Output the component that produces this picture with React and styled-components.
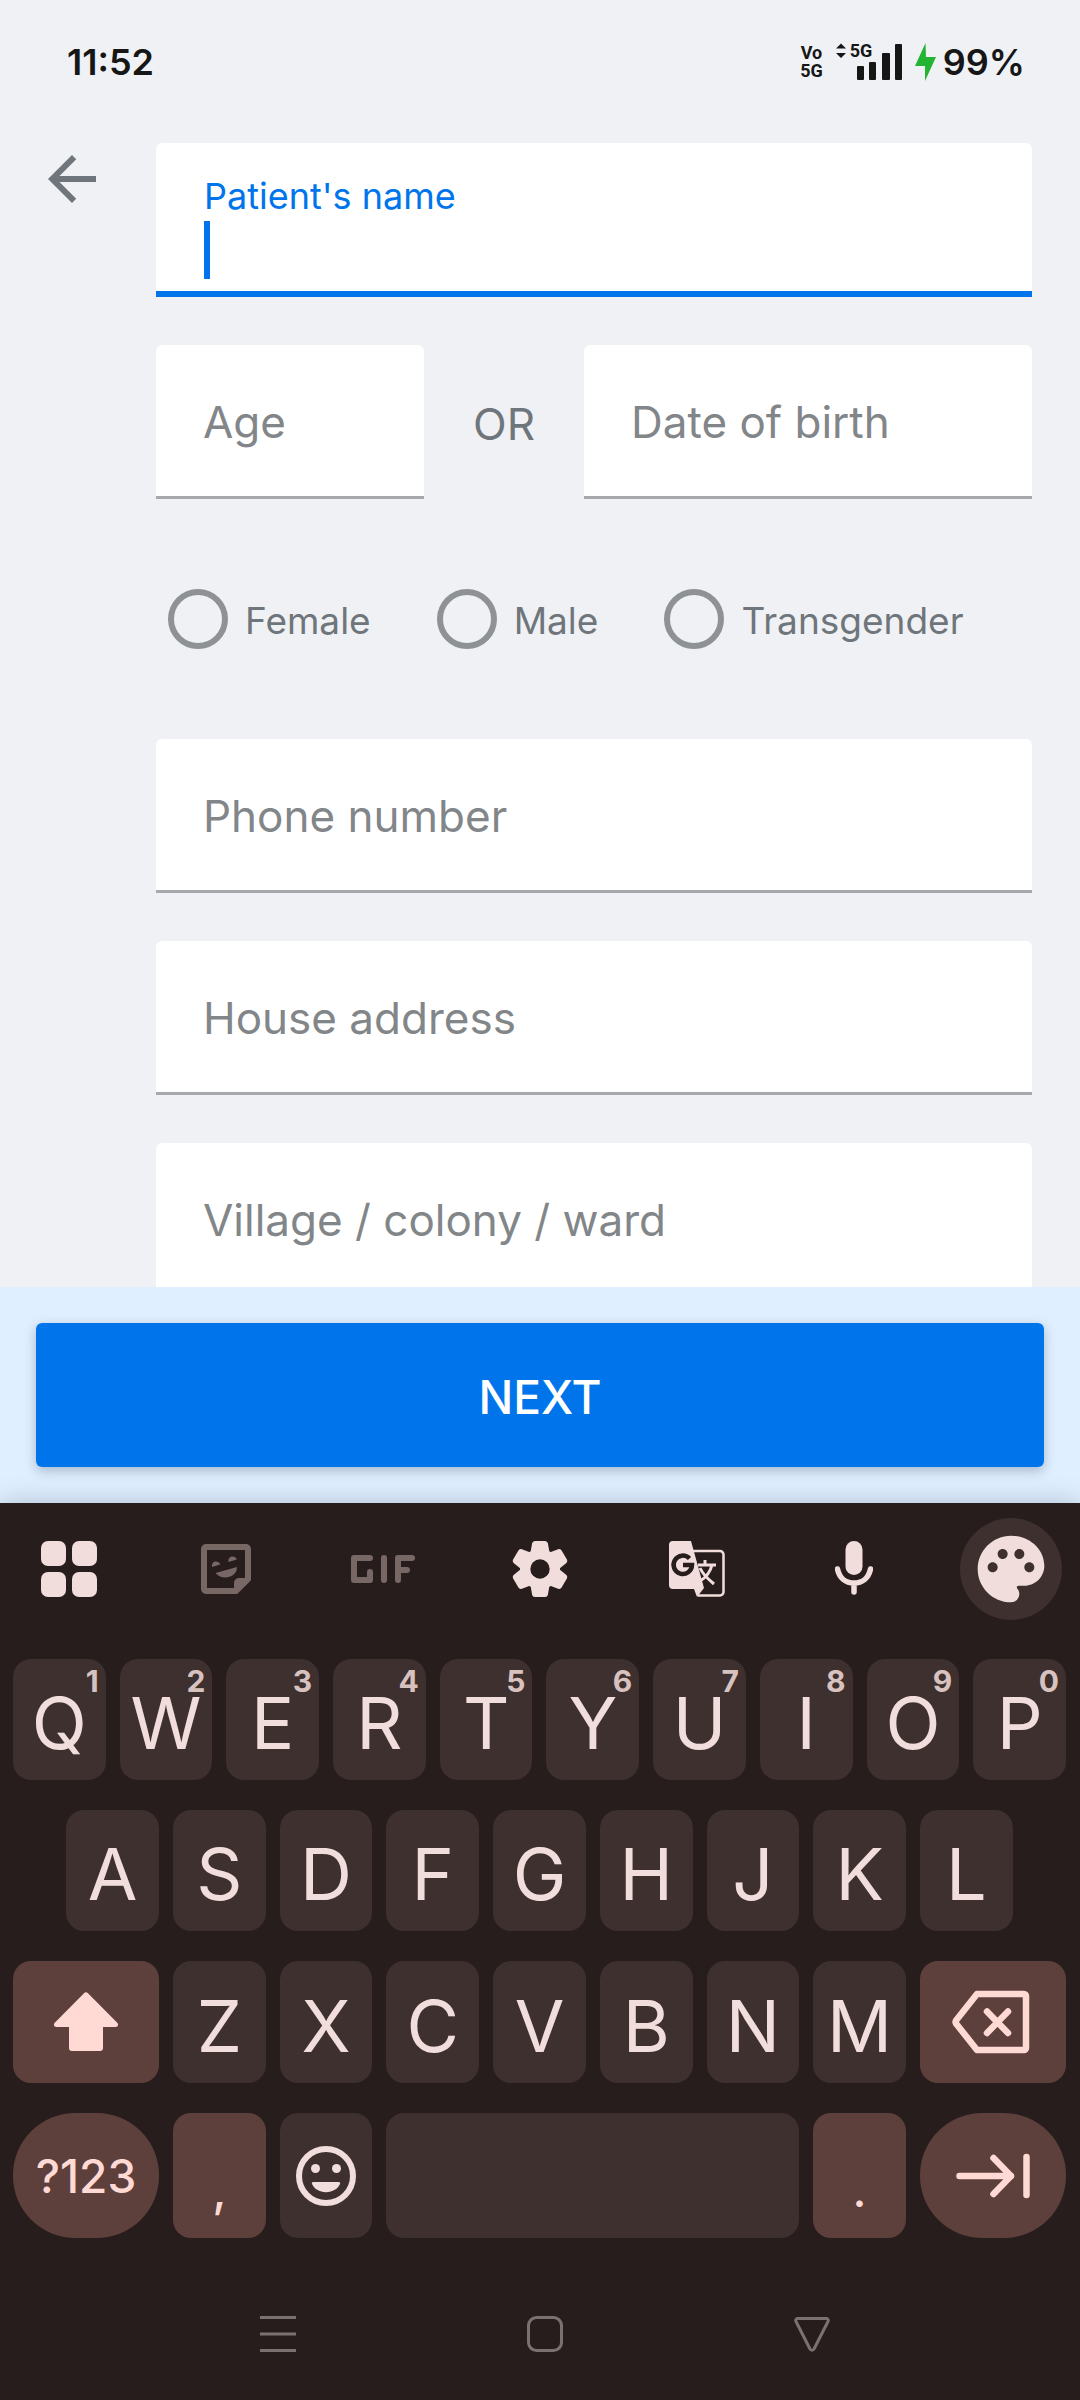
import React from "react";
import styled, { createGlobalStyle } from "styled-components";
import { MdArrowBack, MdPalette } from "react-icons/md";

const color = {
  page: "#f0f1f5",
  ink: "#161616",
  blue: "#0075eb",
  footer: "#dfefff",
  label: "#6f767b",
  hint: "#828689",
  line: "#a6a8ab",
  board: "#271d1c",
  key: "#3d302f",
  keyAccent: "#5d3f3b",
  keyText: "#f1dedc",
  keyAccentText: "#ffdad4",
  keyHint: "#d8c2bf",
  dim: "#776765",
  nav: "#7a7271",
};

const GlobalStyle = createGlobalStyle`
  * { box-sizing: border-box; }
  body { margin: 0; background: ${color.page}; }
  body, button, input { font-family: Inter, "Liberation Sans", sans-serif; }
  button { border: 0; padding: 0; background: none; cursor: pointer; }
`;

const Screen = styled.div`
  display: flex;
  flex-direction: column;
  height: 100vh;
  background: ${color.page};
`;

/* ---------- status bar ---------- */

const StatusBar = styled.header`
  display: flex;
  flex: none;
  align-items: center;
  justify-content: space-between;
  height: 124px;
  padding: 0 55px 0 67px;
  color: ${color.ink};
`;

const Clock = styled.time`
  font-size: 36px;
  font-weight: 600;
`;

const StatusIcons = styled.div`
  display: flex;
  align-items: center;
`;

const VoBadge = styled.span`
  display: flex;
  flex-direction: column;
  align-items: center;
  margin-right: 12px;
  font: 700 18px/18px "Liberation Sans Narrow", Roboto, sans-serif;
`;

const SignalBox = styled.span`
  position: relative;
  display: flex;
  margin-right: 12px;
`;

const SignalLabel = styled.span`
  position: absolute;
  top: 0;
  left: 15px;
  font: 700 18px/16px "Liberation Sans Narrow", Roboto, sans-serif;
`;

const Battery = styled.span`
  margin-left: 6px;
  font-size: 36px;
  font-weight: 600;
`;

/* ---------- form ---------- */

const Body = styled.main`
  display: flex;
  flex: 1;
  min-height: 0;
  overflow: hidden;
  align-items: flex-start;
  padding: 19px 48px 0 36px;
`;

const BackButton = styled.button`
  display: flex;
  flex: none;
  margin-right: 48px;
  color: ${color.label};
`;

const Form = styled.form`
  display: flex;
  flex: 1;
  flex-direction: column;
  gap: 48px;
  min-width: 0;
`;

const FieldBox = styled.div`
  display: grid;
  flex: ${(p) => p.$grow || "none"};
  align-items: center;
  height: 154px;
  min-width: 0;
  background: #fff;
  border-bottom: 3px solid ${color.line};
  border-radius: 6px 6px 0 0;
`;

const FieldLabel = styled.label`
  grid-area: 1 / 1;
  padding: 2px 0 0 47px;
  font-size: 44px;
  line-height: 56px;
  white-space: nowrap;
  color: ${color.hint};
`;

const FieldInput = styled.input`
  grid-area: 1 / 1;
  align-self: stretch;
  width: 100%;
  min-width: 0;
  padding: 0 47px;
  border: 0;
  outline: 0;
  background: transparent;
  font-size: 44px;
  color: ${color.ink};
`;

const ActiveField = styled.div`
  display: flex;
  flex-direction: column;
  height: 154px;
  padding: 28px 48px 0;
  background: #fff;
  border-bottom: 6px solid ${color.blue};
  border-radius: 6px 6px 0 0;
`;

const ActiveLabel = styled.label`
  font-size: 36px;
  line-height: 50px;
  color: ${color.blue};
`;

const ActiveEntry = styled.div`
  display: flex;
  height: 58px;
`;

const Caret = styled.span`
  flex: none;
  width: 6px;
  background: ${color.blue};
`;

const ActiveInput = styled.input`
  flex: 1;
  min-width: 0;
  padding: 0;
  border: 0;
  outline: 0;
  background: transparent;
  caret-color: transparent;
  font-size: 44px;
  color: ${color.ink};
`;

const SplitRow = styled.div`
  display: flex;
  align-items: center;
`;

const OrText = styled.span`
  flex: none;
  width: 160px;
  padding-top: 4px;
  font-size: 44px;
  text-align: center;
  color: ${color.label};
`;

const RadioGroup = styled.div`
  display: flex;
  gap: 66px;
  padding: 42px 12px;
`;

const RadioLabel = styled.label`
  display: flex;
  align-items: center;
  gap: 17px;
  font-size: 37px;
  line-height: 56px;
  color: ${color.label};
`;

const RadioText = styled.span`
  padding-top: 4px;
`;

const Radio = styled.input`
  flex: none;
  width: 60px;
  height: 60px;
  margin: 0;
  appearance: none;
  border: 6px solid #8f9294;
  border-radius: 50%;

  &:checked {
    border-color: ${color.blue};
    box-shadow: inset 0 0 0 10px ${color.page};
    background: ${color.blue};
  }
`;

const Footer = styled.footer`
  flex: none;
  padding: 36px;
  background: ${color.footer};
`;

const NextButton = styled.button`
  width: 100%;
  height: 144px;
  padding-top: 4px;
  border-radius: 6px;
  background: ${color.blue};
  box-shadow: 0 4px 12px rgba(40, 60, 90, 0.3);
  font-size: 46px;
  font-weight: 500;
  color: #fff;
`;

/* ---------- keyboard ---------- */

const Keyboard = styled.section`
  position: relative;
  flex: none;
  background: ${color.board};
  box-shadow: 0 0 24px rgba(40, 50, 70, 0.25);
`;

const Toolbar = styled.div`
  display: flex;
  justify-content: space-between;
  padding: 15px 18px 39px;
`;

const Tool = styled.button`
  display: flex;
  align-items: center;
  justify-content: center;
  width: 102px;
  height: 102px;
  border-radius: 50%;
  background: ${(p) => (p.$filled ? color.key : "transparent")};
  color: ${(p) => (p.$dim ? color.dim : color.keyText)};
`;

const KeyGrid = styled.div`
  display: grid;
  grid-template-columns: repeat(20, 1fr);
  grid-template-rows: 121px 121px 122px 125px;
  gap: 30px 14px;
  padding: 0 14px 0 13px;
`;

const keyPadding = (p) => {
  if (p.$low) return 28;
  return p.$icon || p.$small ? 0 : 6;
};

const Key = styled.button`
  position: relative;
  display: flex;
  align-items: center;
  justify-content: center;
  grid-column: ${(p) => (p.$start ? `${p.$start} / ` : "")}span ${(p) => p.$span || 2};
  min-width: 0;
  padding-top: ${keyPadding}px;
  border-radius: ${(p) => (p.$round ? 62 : 18)}px;
  background: ${(p) => (p.$accent ? color.keyAccent : color.key)};
  color: ${(p) => (p.$accent ? color.keyAccentText : color.keyText)};
  font-size: ${(p) => (p.$small ? 46 : 72)}px;
  font-weight: ${(p) => (p.$small ? 500 : 400)};
`;

const KeyHint = styled.span`
  position: absolute;
  top: 4px;
  right: 7px;
  font-size: 30px;
  font-weight: 700;
  line-height: 36px;
  color: ${color.keyHint};
`;

const NavBar = styled.nav`
  display: flex;
  height: 162px;
  padding: 30px 134px 0 144px;
`;

const NavButton = styled.button`
  display: flex;
  flex: 1;
  align-items: center;
  justify-content: center;
  color: ${color.nav};
`;

/* ---------- drawings ---------- */

const Signal = () => (
  <svg width="68" height="38" viewBox="0 0 68 38" fill="currentColor" aria-hidden="true">
    <path d="M6 0.500l5 5H1zM6 15l5-5H1z" />
    <rect x="22" y="23" width="7" height="14" rx="1" />
    <rect x="34" y="19" width="7" height="18" rx="1" />
    <rect x="47" y="10" width="8" height="27" rx="1" />
    <rect x="60" y="1" width="7" height="36" rx="1" />
  </svg>
);

const Bolt = () => (
  <svg width="22" height="38" viewBox="0 0 22 38" fill="#24b333" aria-hidden="true">
    <path d="M10.500 0L0 23h10v15L21 14H11z" />
  </svg>
);

const GridIcon = () => (
  <svg width="56" height="56" viewBox="0 0 56 56" fill="currentColor" aria-hidden="true">
    <rect width="25" height="25" rx="7" />
    <rect x="31" width="25" height="25" rx="7" />
    <rect y="31" width="25" height="25" rx="7" />
    <rect x="31" y="31" width="25" height="25" rx="7" />
  </svg>
);

const StickerIcon = () => (
  <svg width="50" height="50" viewBox="0 0 50 50" fill="none" aria-hidden="true">
    <path
      d="M5 3h40a2 2 0 0 1 2 2v30L35 47H5a2 2 0 0 1-2-2V5a2 2 0 0 1 2-2z"
      stroke="currentColor"
      strokeWidth="6"
    />
    <path d="M33 48V39a5 5 0 0 1 5-5h10z" fill="currentColor" />
    <path d="M11 23a4.300 4.300 0 1 1 8.300-2.500zM27.500 18a4.300 4.300 0 1 1 8.300-2.500zM14.500 29L36 23c0 11-15 14-21.500 6z" fill="currentColor" />
  </svg>
);

const GifIcon = () => (
  <svg
    width="64"
    height="28"
    viewBox="0 0 64 28"
    fill="none"
    stroke="currentColor"
    strokeWidth="6"
    strokeLinecap="round"
    strokeLinejoin="round"
    aria-hidden="true"
  >
    <path d="M19 3H3v22h16v-8M33 3v22M61 3H47v22M47 15h9" />
  </svg>
);

const GearIcon = () => (
  <svg width="56" height="56" viewBox="-28 -28 56 56" fill="currentColor" aria-hidden="true">
    <circle r="20" />
    {[0, 60, 120, 180, 240, 300].map((turn) => (
      <path
        key={turn}
        d="M-6.500-16L-5-25H5L6.500-16 0-9z"
        stroke="currentColor"
        strokeWidth="6"
        strokeLinejoin="round"
        transform={`rotate(${turn})`}
      />
    ))}
    <circle r="9.700" fill={color.board} />
  </svg>
);

const TranslateIcon = () => (
  <svg width="56" height="56" viewBox="0 0 56 56" fill="none" aria-hidden="true">
    <path d="M24 10h27a3.500 3.500 0 0 1 3.500 3.500V51a3.500 3.500 0 0 1-3.500 3.500H29" stroke="currentColor" strokeWidth="2.500" />
    <path d="M4 0h18l13 47-7 9-3-8H4a4 4 0 0 1-4-4V4a4 4 0 0 1 4-4z" fill="currentColor" />
    <path d="M20.500 17.500A9.200 9.200 0 1 0 23 24H14" stroke={color.board} strokeWidth="4.500" />
    <path d="M29 24h18M36 19v5M43 24c-2 8-7 13-12 16M31 27c3 7 8 11 14 16" stroke="currentColor" strokeWidth="3" />
  </svg>
);

const MicIcon = () => (
  <svg width="38" height="56" viewBox="0 0 38 56" fill="none" aria-hidden="true">
    <rect x="10.500" y="0" width="17" height="34" rx="8.500" fill="currentColor" />
    <path
      d="M2.500 28c2 9 8 14 16.500 14s14.500-5 16.500-14M19 42v9"
      stroke="currentColor"
      strokeWidth="5.500"
      strokeLinecap="round"
    />
  </svg>
);

const ShiftIcon = () => (
  <svg width="64" height="60" viewBox="0 0 64 60" fill="currentColor" aria-hidden="true">
    <path d="M30 1.200a3 3 0 0 1 4 0L63 30.500c2 2 1 4.500-1.500 4.500H49v21a3 3 0 0 1-3 3H18a3 3 0 0 1-3-3V35H2.500C0 35-1 32.500 1 30.500z" />
  </svg>
);

const BackspaceIcon = () => (
  <svg
    width="82"
    height="64"
    viewBox="0 0 82 64"
    fill="none"
    stroke="currentColor"
    strokeWidth="6.500"
    strokeLinejoin="round"
    strokeLinecap="round"
    aria-hidden="true"
  >
    <path d="M25 4h47a2 2 0 0 1 2 2v52a2 2 0 0 1-2 2H25L4 33.500a3 3 0 0 1 0-3z" />
    <path d="M35 21.500L56 43M56 21.500L35 43" />
  </svg>
);

const TabIcon = () => (
  <svg
    width="74"
    height="46"
    viewBox="0 0 74 46"
    fill="none"
    stroke="currentColor"
    strokeWidth="6.500"
    strokeLinejoin="round"
    strokeLinecap="round"
    aria-hidden="true"
  >
    <path d="M3.500 23H55M37.500 5L55 23 37.500 41M70.500 4v38" />
  </svg>
);

const SmileIcon = () => (
  <svg width="72" height="72" viewBox="0 0 24 24" fill="currentColor" aria-hidden="true">
    <circle cx="12" cy="12" r="9" fill="none" stroke="currentColor" strokeWidth="2" />
    <circle cx="8.500" cy="9.500" r="1.500" />
    <circle cx="15.500" cy="9.500" r="1.500" />
    <path d="M7.700 14h8.600c.3 0 .5.300.400.600C16 16.300 14.200 17.400 12 17.400s-4-1.100-4.700-2.800c-.1-.3.100-.6.400-.6z" />
  </svg>
);

const NavIcon = ({ children }) => (
  <svg width="36" height="36" viewBox="0 0 36 36" fill="none" stroke="currentColor" strokeWidth="3" strokeLinejoin="round" aria-hidden="true">
    {children}
  </svg>
);

/* ---------- parts ---------- */

const Field = ({ id, label, type = "text", grow }) => (
  <FieldBox $grow={grow}>
    <FieldLabel htmlFor={id}>{label}</FieldLabel>
    <FieldInput id={id} type={type} />
  </FieldBox>
);

const genders = ["Female", "Male", "Transgender"];
const topRow = [..."QWERTYUIOP"];
const homeRow = [..."ASDFGHJKL"];
const bottomRow = [..."ZXCVBNM"];

export default function App() {
  return (
    <Screen>
      <GlobalStyle />
      <StatusBar>
        <Clock>11:52</Clock>
        <StatusIcons>
          <VoBadge>
            <span>Vo</span>
            <span>5G</span>
          </VoBadge>
          <SignalBox>
            <Signal />
            <SignalLabel>5G</SignalLabel>
          </SignalBox>
          <Bolt />
          <Battery>99%</Battery>
        </StatusIcons>
      </StatusBar>

      <Body>
        <BackButton type="button" aria-label="Back">
          <MdArrowBack size={72} />
        </BackButton>
        <Form id="patient" onSubmit={(e) => e.preventDefault()}>
          <ActiveField>
            <ActiveLabel htmlFor="name">Patient's name</ActiveLabel>
            <ActiveEntry>
              <Caret />
              <ActiveInput id="name" type="text" />
            </ActiveEntry>
          </ActiveField>
          <SplitRow>
            <Field id="age" label="Age" grow="0 0 268px" />
            <OrText>OR</OrText>
            <Field id="dob" label="Date of birth" grow="1" />
          </SplitRow>
          <RadioGroup role="radiogroup" aria-label="Gender">
            {genders.map((g) => (
              <RadioLabel key={g}>
                <Radio type="radio" name="gender" value={g} />
                <RadioText>{g}</RadioText>
              </RadioLabel>
            ))}
          </RadioGroup>
          <Field id="phone" label="Phone number" type="tel" />
          <Field id="house" label="House address" />
          <Field id="village" label="Village / colony / ward" />
        </Form>
      </Body>

      <Footer>
        <NextButton type="submit" form="patient">NEXT</NextButton>
      </Footer>

      <Keyboard aria-label="Keyboard">
        <Toolbar>
          <Tool aria-label="Menu"><GridIcon /></Tool>
          <Tool aria-label="Stickers" $dim><StickerIcon /></Tool>
          <Tool aria-label="GIF" $dim><GifIcon /></Tool>
          <Tool aria-label="Settings"><GearIcon /></Tool>
          <Tool aria-label="Translate"><TranslateIcon /></Tool>
          <Tool aria-label="Voice input"><MicIcon /></Tool>
          <Tool aria-label="Themes" $filled><MdPalette size={80} /></Tool>
        </Toolbar>
        <KeyGrid>
          {topRow.map((k, i) => (
            <Key key={k}>
              {k}
              <KeyHint>{(i + 1) % 10}</KeyHint>
            </Key>
          ))}
          {homeRow.map((k, i) => (
            <Key key={k} $start={i === 0 ? 2 : undefined}>{k}</Key>
          ))}
          <Key aria-label="Shift" $start={1} $span={3} $accent $icon><ShiftIcon /></Key>
          {bottomRow.map((k) => (
            <Key key={k}>{k}</Key>
          ))}
          <Key aria-label="Backspace" $span={3} $accent $icon><BackspaceIcon /></Key>
          <Key $span={3} $accent $round $small>?123</Key>
          <Key $accent $small $low>,</Key>
          <Key aria-label="Emoji" $icon><SmileIcon /></Key>
          <Key aria-label="Space" $span={8} />
          <Key $accent $small $low>.</Key>
          <Key aria-label="Next field" $span={3} $accent $round $icon><TabIcon /></Key>
        </KeyGrid>
        <NavBar aria-label="System">
          <NavButton aria-label="Recent apps">
            <NavIcon><path d="M0 1.500h36M0 18h36M0 34.500h36" /></NavIcon>
          </NavButton>
          <NavButton aria-label="Home">
            <NavIcon><rect x="1.500" y="1.500" width="33" height="33" rx="8" /></NavIcon>
          </NavButton>
          <NavButton aria-label="Back to previous">
            <NavIcon><path d="M3.500 2.500h29a2 2 0 0 1 1.500 3L20 33a2.200 2.200 0 0 1-4 0L2 5.500a2 2 0 0 1 1.500-3z" /></NavIcon>
          </NavButton>
        </NavBar>
      </Keyboard>
    </Screen>
  );
}
